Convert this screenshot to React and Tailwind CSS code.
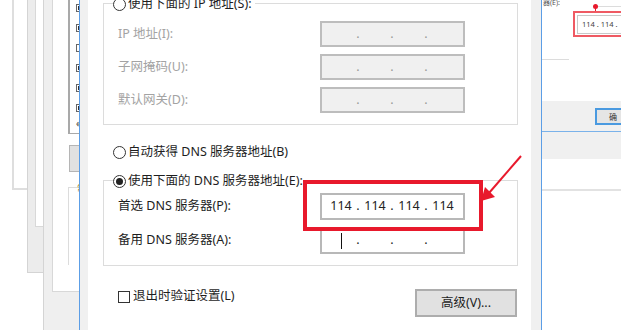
import React from "react";

const FONT = "font-['Noto_Sans','Noto_Sans_CJK_SC',sans-serif]";

function IPField({ values, disabled, caret }) {
  return (
    <div
      className={`flex items-center h-full pl-[5px] text-[12.5px] ${
        disabled ? "text-[#9a9a9a]" : "text-[#222]"
      }`}
    >
      {[0, 1, 2, 3].map((i) => (
        <React.Fragment key={i}>
          <span className="w-[28px] flex justify-center items-center leading-none">
            {values ? values[i] : caret && i === 0 ? (
              <span className="block w-[1px] h-[16px] bg-[#111]" />
            ) : (
              ""
            )}
          </span>
          {i < 3 && (
            <span className="w-[6px] text-center leading-none">.</span>
          )}
        </React.Fragment>
      ))}
    </div>
  );
}

function Radio({ checked }) {
  return (
    <span className="w-[13px] h-[13px] rounded-full border border-[#333] bg-white flex items-center justify-center shrink-0">
      {checked && <span className="w-[7px] h-[7px] rounded-full bg-[#222]" />}
    </span>
  );
}

export default function App() {
  return (
    <div className={`relative w-[636px] h-[330px] bg-white overflow-hidden ${FONT}`}>
      {/* background windows on the left */}
      <div className="absolute left-[12px] top-0 w-[16px] h-[190px] border-l-2 border-b-2 border-[#dedede]" />
      <div className="absolute left-[27px] top-0 w-[17px] h-[273px] bg-[#ececec] border-l border-b border-[#d4d4d4]">
        <div className="ml-[7px] w-[10px] h-[227px] bg-white border-l border-b border-[#d8d8d8]" />
      </div>
      <div className="absolute left-[43px] top-0 w-[37px] h-[330px] bg-[#efefef] border-l border-[#d4d4d4]">
        <div className="ml-[8px] w-[28px] h-[292px] bg-white border-l border-b border-[#d8d8d8] flex flex-col">
          <div className="ml-[15px] w-[13px] h-[134px] border-l-2 border-b border-[#a9a9a9] flex flex-col pl-[6px] pt-[4px] gap-[12px]">
            {[true, true, false, true, true, true].map((c, i) => (
              <span
                key={i}
                className="w-[6px] h-[8px] border border-[#666] bg-white flex items-center justify-center"
              >
                {c && <span className="w-[3px] h-[4px] bg-[#333]" />}
              </span>
            ))}
            <span className="text-[10px] leading-none text-[#444] -mt-[6px]">«</span>
          </div>
          <div className="mt-[11px] ml-[16px] w-[12px] h-[27px] bg-[#e1e1e1] border border-[#b5b5b5]" />
          <div className="mt-[15px] ml-[15px] w-[13px] h-[78px] border-l border-t border-[#dcdcdc] pl-[8px]">
            <span className="block text-[8px] leading-none text-[#a07a20] -mt-[4px]">常</span>
          </div>
        </div>
      </div>

      {/* main dialog */}
      <div className="absolute left-[79px] top-0 w-[462px] h-[330px] border-l border-[#5c9ee6] bg-[#f0f0f0] pl-[8px] pr-[10px] flex">
        <div className="w-[443px] h-full bg-white flex flex-col text-[12.5px] text-[#1e1e1e]">
          {/* IP group */}
          <div className="relative mt-[3px] ml-[15px] w-[415px] border border-[#dcdcdc] pt-[17px] pb-[11px] flex flex-col gap-[7px]">
            <div className="absolute left-[9px] top-[-9px] h-[18px] bg-white flex items-center gap-[2px] pr-[3px]">
              <Radio />
              <span className="leading-[18px]">使用下面的 IP 地址(S):</span>
            </div>
            {["IP 地址(I):", "子网掩码(U):", "默认网关(D):"].map((l) => (
              <div key={l} className="grid grid-cols-[216px_145px] items-center h-[26px]">
                <span className="pl-[14px] text-[#a3a3a3]">{l}</span>
                <div className="h-[26px] bg-[#f0f0f0] border-2 border-[#bdbdbd]">
                  <IPField disabled />
                </div>
              </div>
            ))}
          </div>

          {/* auto DNS */}
          <div className="mt-[18px] ml-[25px] h-[18px] flex items-center gap-[2px]">
            <Radio />
            <span>自动获得 DNS 服务器地址(B)</span>
          </div>

          {/* DNS group */}
          <div className="relative mt-[19px] ml-[15px] w-[415px] border border-[#dcdcdc] pt-[12px] pb-[11px] flex flex-col gap-[7px]">
            <div className="absolute left-[9px] top-[-9px] h-[18px] bg-white flex items-center gap-[2px] pr-[3px]">
              <Radio checked />
              <span className="leading-[18px]">使用下面的 DNS 服务器地址(E):</span>
            </div>
            <div className="grid grid-cols-[216px_145px] items-center h-[27px]">
              <span className="pl-[14px]">首选 DNS 服务器(P):</span>
              <div className="h-[27px] bg-white border-2 border-[#b8b8b8]">
                <IPField values={["114", "114", "114", "114"]} />
              </div>
            </div>
            <div className="grid grid-cols-[216px_145px] items-center h-[27px]">
              <span className="pl-[14px]">备用 DNS 服务器(A):</span>
              <div className="h-[27px] bg-white border-2 border-[#b8b8b8]">
                <IPField caret />
              </div>
            </div>
          </div>

          {/* bottom row */}
          <div className="flex items-start pl-[30px] pr-[14px]">
            <div className="mt-[22px] h-[17px] flex items-center gap-[3px]">
              <span className="w-[12px] h-[12px] border border-[#333] bg-white" />
              <span>退出时验证设置(L)</span>
            </div>
            <div className="ml-auto mt-[23px] w-[102px] h-[28px] bg-[#e1e1e1] border-2 border-[#adadad] flex items-center justify-center">
              高级(V)...
            </div>
          </div>
        </div>
      </div>

      {/* right window */}
      <div className="absolute left-[541px] top-0 w-[95px] h-[330px] border-l border-[#5c9ee6] bg-white">
        <div className="w-[79px] flex flex-col">
          <div className="relative h-[101px]">
            <span className="absolute left-[1px] top-[-2px] text-[7px] leading-[10px] text-[#555]">器(E):</span>
            <div className="absolute left-[55px] top-[6px] w-[24px] h-[1px] bg-[#dcdcdc]" />
            <div className="absolute left-[51px] top-[4px] w-[5px] h-[5px] rounded-full bg-[#e8192c]" />
            <div className="absolute left-[53px] top-[6px] w-[1px] h-[6px] bg-[#e8192c]" />
            <div className="absolute left-[31px] top-[11px] w-[48px] h-[26px] border-2 border-r-0 border-[#ef5a63] flex items-center pl-[2px]">
              <div className="w-full h-[19px] border border-r-0 border-[#c8c8c8] text-[7.5px] leading-[17px] text-[#444] pl-[4px] whitespace-nowrap overflow-hidden">
                114 . 114 .
              </div>
            </div>
            <div className="absolute left-0 top-[59px] w-[27px] h-[1px] bg-[#dcdcdc]" />
          </div>
          <div className="h-[30px] bg-[#f0f0f0] pt-[7px] pl-[53px]">
            <div className="w-[26px] h-[17px] border-2 border-r-0 border-[#4a9ae0] bg-[#e5e5e5] text-[8px] leading-[13px] text-[#333] pl-[12px] overflow-hidden">
              确
            </div>
          </div>
          <div className="h-[1px] bg-[#7ab2ea]" />
          <div className="h-[27px] bg-[#f0f0f0]" />
          <div className="h-[30px]" />
          <div className="h-[2px] bg-[#e2e2e2]" />
        </div>
      </div>

      {/* annotations */}
      <div className="absolute left-[303px] top-[180px] w-[180px] h-[51px] border-[4px] border-[#e8192c]" />
      <svg className="absolute left-0 top-0" width="636" height="330">
        <line x1="521" y1="156" x2="489" y2="193" stroke="#e8192c" strokeWidth="2" />
        <polygon points="481,201 485,187 495,197" fill="#e8192c" />
      </svg>
    </div>
  );
}
